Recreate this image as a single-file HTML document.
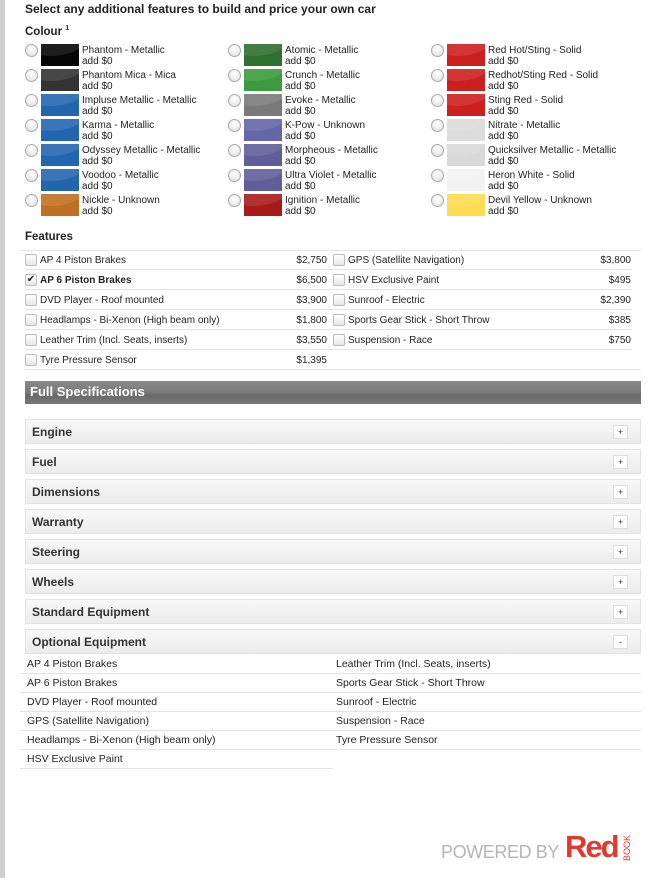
<!DOCTYPE html>
<html><head><meta charset="utf-8"><style>
*{margin:0;padding:0;box-sizing:border-box}
body{width:649px;height:878px;background:#fff;font-family:"Liberation Sans",Arial,sans-serif;color:#222;position:relative;overflow:hidden}
.lbar{position:absolute;left:0;top:0;width:5px;height:878px;background:#d0d0d0}
.a{position:absolute}
.h1{left:25px;top:2px;font-size:12px;font-weight:bold}
.h2{font-size:11.5px;font-weight:bold}
.c{position:absolute;font-size:10px;line-height:11px;color:#222}
.rad{position:absolute;width:13px;height:13px;border-radius:50%;border:1px solid #aaa;background:radial-gradient(circle at 50% 35%,#fff,#ddd)}
.sw{position:absolute;width:38px;height:22px;overflow:hidden}
.sw:after{content:"";position:absolute;left:-30px;top:-40px;width:80px;height:52px;border-radius:50%;background:rgba(255,255,255,.1)}
.row{position:absolute;height:20px;border-bottom:1px solid #e4e4e4;font-size:10px;line-height:21px}
.cb{position:absolute;left:0;top:4px;width:12px;height:12px;border:1px solid #bbb;border-radius:2px;background:linear-gradient(#fff,#e6e6e6)}
.row .t{position:absolute;left:15px}
.row .p{position:absolute;right:0}
.fs{left:25px;top:381px;width:616px;height:23px;background:linear-gradient(#8a8a8a 0,#7a7a7a 50%,#6a6a6a 60%,#777 100%);color:#fff;font-weight:bold;font-size:13px;line-height:22px;padding-left:5px}
.acc{position:absolute;left:25px;width:616px;height:25px;background:linear-gradient(#f8f8f8,#ececec);border:1px solid #e2e2e2;font-size:12px;font-weight:bold;color:#333;line-height:24px;padding-left:6px}
.acc b{position:absolute;right:12px;top:5px;width:15px;height:14px;background:#fff;border:1px solid #ddd;font-size:9px;line-height:12px;text-align:center;font-weight:normal}
.oe{position:absolute;height:19px;border-bottom:1px solid #e4e4e4;font-size:10.5px;line-height:18px;padding-left:3px}
</style></head><body>
<div class="lbar"></div>
<div class="a h1">Select any additional features to build and price your own car</div>
<div class="a h2" style="left:25px;top:25px">Colour <sup style="font-size:7px">1</sup></div>

<div class="rad" style="left:25px;top:44px"></div><div class="sw" style="left:41px;top:44px;background:#050505"></div><div class="c" style="left:82px;top:45px">Phantom - Metallic<br>add $0</div>
<div class="rad" style="left:25px;top:69px"></div><div class="sw" style="left:41px;top:69px;background:#333"></div><div class="c" style="left:82px;top:70px">Phantom Mica - Mica<br>add $0</div>
<div class="rad" style="left:25px;top:94px"></div><div class="sw" style="left:41px;top:94px;background:#2366b0"></div><div class="c" style="left:82px;top:95px">Impluse Metallic - Metallic<br>add $0</div>
<div class="rad" style="left:25px;top:119px"></div><div class="sw" style="left:41px;top:119px;background:#2366b0"></div><div class="c" style="left:82px;top:120px">Karma - Metallic<br>add $0</div>
<div class="rad" style="left:25px;top:144px"></div><div class="sw" style="left:41px;top:144px;background:#2366b0"></div><div class="c" style="left:82px;top:145px">Odyssey Metallic - Metallic<br>add $0</div>
<div class="rad" style="left:25px;top:169px"></div><div class="sw" style="left:41px;top:169px;background:#2366b0"></div><div class="c" style="left:82px;top:170px">Voodoo - Metallic<br>add $0</div>
<div class="rad" style="left:25px;top:194px"></div><div class="sw" style="left:41px;top:194px;background:#c07020"></div><div class="c" style="left:82px;top:195px">Nickle - Unknown<br>add $0</div>

<div class="rad" style="left:228px;top:44px"></div><div class="sw" style="left:244px;top:44px;background:#2f6f2f"></div><div class="c" style="left:285px;top:45px">Atomic - Metallic<br>add $0</div>
<div class="rad" style="left:228px;top:69px"></div><div class="sw" style="left:244px;top:69px;background:#3c9a3c"></div><div class="c" style="left:285px;top:70px">Crunch - Metallic<br>add $0</div>
<div class="rad" style="left:228px;top:94px"></div><div class="sw" style="left:244px;top:94px;background:#7a7a7a"></div><div class="c" style="left:285px;top:95px">Evoke - Metallic<br>add $0</div>
<div class="rad" style="left:228px;top:119px"></div><div class="sw" style="left:244px;top:119px;background:#6466a8"></div><div class="c" style="left:285px;top:120px">K-Pow - Unknown<br>add $0</div>
<div class="rad" style="left:228px;top:144px"></div><div class="sw" style="left:244px;top:144px;background:#5f5e98"></div><div class="c" style="left:285px;top:145px">Morpheous - Metallic<br>add $0</div>
<div class="rad" style="left:228px;top:169px"></div><div class="sw" style="left:244px;top:169px;background:#5f5e98"></div><div class="c" style="left:285px;top:170px">Ultra Violet - Metallic<br>add $0</div>
<div class="rad" style="left:228px;top:194px"></div><div class="sw" style="left:244px;top:194px;background:#a81a1a"></div><div class="c" style="left:285px;top:195px">Ignition - Metallic<br>add $0</div>

<div class="rad" style="left:431px;top:44px"></div><div class="sw" style="left:447px;top:44px;background:#cc1f1f"></div><div class="c" style="left:488px;top:45px">Red Hot/Sting - Solid<br>add $0</div>
<div class="rad" style="left:431px;top:69px"></div><div class="sw" style="left:447px;top:69px;background:#cc1f1f"></div><div class="c" style="left:488px;top:70px">Redhot/Sting Red - Solid<br>add $0</div>
<div class="rad" style="left:431px;top:94px"></div><div class="sw" style="left:447px;top:94px;background:#cc1f1f"></div><div class="c" style="left:488px;top:95px">Sting Red - Solid<br>add $0</div>
<div class="rad" style="left:431px;top:119px"></div><div class="sw" style="left:447px;top:119px;background:#dcdcdc"></div><div class="c" style="left:488px;top:120px">Nitrate - Metallic<br>add $0</div>
<div class="rad" style="left:431px;top:144px"></div><div class="sw" style="left:447px;top:144px;background:#d8d8d8"></div><div class="c" style="left:488px;top:145px">Quicksilver Metallic - Metallic<br>add $0</div>
<div class="rad" style="left:431px;top:169px"></div><div class="sw" style="left:447px;top:169px;background:#f2f2f2"></div><div class="c" style="left:488px;top:170px">Heron White - Solid<br>add $0</div>
<div class="rad" style="left:431px;top:194px"></div><div class="sw" style="left:447px;top:194px;background:#fddc50"></div><div class="c" style="left:488px;top:195px">Devil Yellow - Unknown<br>add $0</div>

<div class="a h2" style="left:25px;top:231px">Features</div>
<div class="a" style="left:20px;top:250px;width:621px;border-top:1px solid #e4e4e4"></div>
<div class="row" style="left:25px;top:250px;width:302px"><span class="cb"></span><span class="t">AP 4 Piston Brakes</span><span class="p">$2,750</span></div>
<div class="row" style="left:25px;top:270px;width:302px"><span class="cb" style="font-size:10px;line-height:10px;text-align:center">✔</span><span class="t" style="font-weight:bold">AP 6 Piston Brakes</span><span class="p">$6,500</span></div>
<div class="row" style="left:25px;top:290px;width:302px"><span class="cb"></span><span class="t">DVD Player - Roof mounted</span><span class="p">$3,900</span></div>
<div class="row" style="left:25px;top:310px;width:302px"><span class="cb"></span><span class="t">Headlamps - Bi-Xenon (High beam only)</span><span class="p">$1,800</span></div>
<div class="row" style="left:25px;top:330px;width:302px"><span class="cb"></span><span class="t">Leather Trim (Incl. Seats, inserts)</span><span class="p">$3,550</span></div>
<div class="row" style="left:25px;top:350px;width:302px"><span class="cb"></span><span class="t">Tyre Pressure Sensor</span><span class="p">$1,395</span></div>
<div class="row" style="left:327px;top:250px;width:304px"><span class="cb" style="left:6px"></span><span class="t" style="left:21px">GPS (Satellite Navigation)</span><span class="p">$3,800</span></div>
<div class="row" style="left:327px;top:270px;width:304px"><span class="cb" style="left:6px"></span><span class="t" style="left:21px">HSV Exclusive Paint</span><span class="p">$495</span></div>
<div class="row" style="left:327px;top:290px;width:304px"><span class="cb" style="left:6px"></span><span class="t" style="left:21px">Sunroof - Electric</span><span class="p">$2,390</span></div>
<div class="row" style="left:327px;top:310px;width:304px"><span class="cb" style="left:6px"></span><span class="t" style="left:21px">Sports Gear Stick - Short Throw</span><span class="p">$385</span></div>
<div class="row" style="left:327px;top:330px;width:304px"><span class="cb" style="left:6px"></span><span class="t" style="left:21px">Suspension - Race</span><span class="p">$750</span></div>
<div class="row" style="left:327px;top:350px;width:314px;border-bottom:1px solid #e4e4e4"></div>

<div class="a fs">Full Specifications</div>
<div class="acc" style="top:419px">Engine<b>+</b></div>
<div class="acc" style="top:449px">Fuel<b>+</b></div>
<div class="acc" style="top:479px">Dimensions<b>+</b></div>
<div class="acc" style="top:509px">Warranty<b>+</b></div>
<div class="acc" style="top:539px">Steering<b>+</b></div>
<div class="acc" style="top:569px">Wheels<b>+</b></div>
<div class="acc" style="top:599px">Standard Equipment<b>+</b></div>
<div class="acc" style="top:629px">Optional Equipment<b>-</b></div>

<div class="oe" style="left:20px;top:655px;width:313px;padding-left:7px">AP 4 Piston Brakes</div>
<div class="oe" style="left:20px;top:674px;width:313px;padding-left:7px">AP 6 Piston Brakes</div>
<div class="oe" style="left:20px;top:693px;width:313px;padding-left:7px">DVD Player - Roof mounted</div>
<div class="oe" style="left:20px;top:712px;width:313px;padding-left:7px">GPS (Satellite Navigation)</div>
<div class="oe" style="left:20px;top:731px;width:313px;padding-left:7px">Headlamps - Bi-Xenon (High beam only)</div>
<div class="oe" style="left:20px;top:750px;width:313px;padding-left:7px">HSV Exclusive Paint</div>
<div class="oe" style="left:333px;top:655px;width:308px">Leather Trim (Incl. Seats, inserts)</div>
<div class="oe" style="left:333px;top:674px;width:308px">Sports Gear Stick - Short Throw</div>
<div class="oe" style="left:333px;top:693px;width:308px">Sunroof - Electric</div>
<div class="oe" style="left:333px;top:712px;width:308px">Suspension - Race</div>
<div class="oe" style="left:333px;top:731px;width:308px">Tyre Pressure Sensor</div>

<div class="a" style="left:441px;top:842px;font-size:18px;color:#b5b5b5;letter-spacing:-0.4px">POWERED BY</div>
<div class="a" style="left:565px;top:829px;font-size:31px;font-weight:bold;color:#e03a2e;letter-spacing:-2px">Red</div>
<div class="a" style="left:620px;top:831px;width:14px;height:30px;font-size:9px;color:#e03a2e;writing-mode:vertical-rl;transform:rotate(180deg);line-height:14px">BOOK</div>
</body></html>
